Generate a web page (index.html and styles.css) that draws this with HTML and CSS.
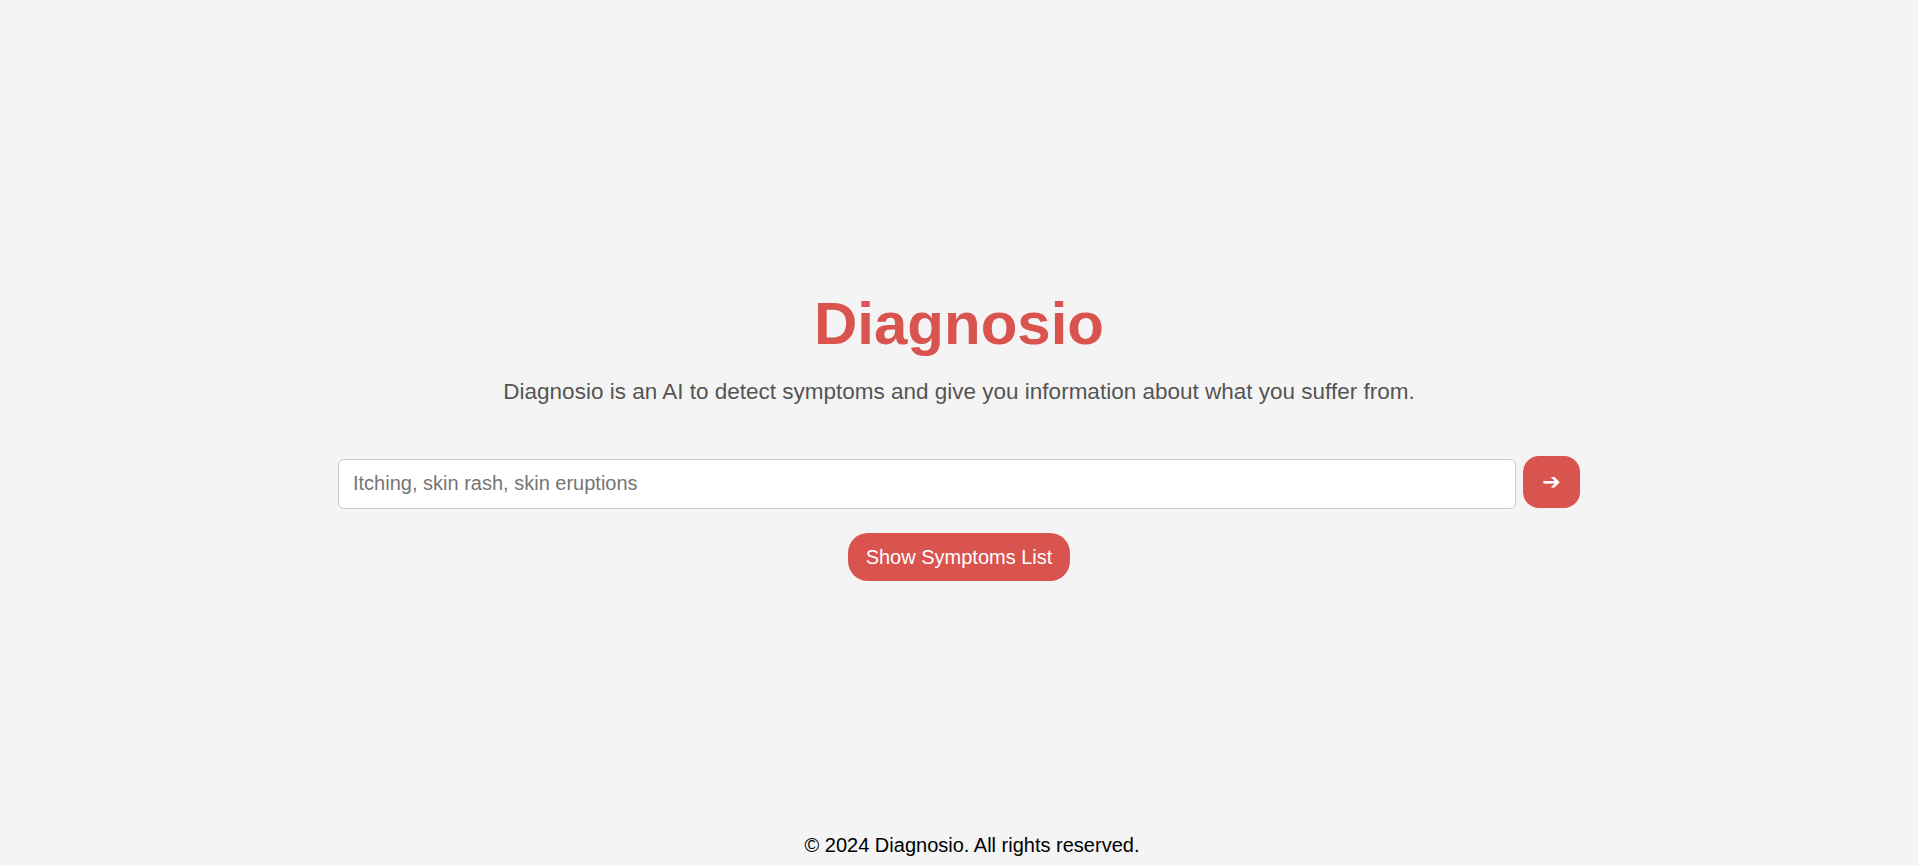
FILE: index.html
```html
<!DOCTYPE html>
<html lang="en">
<head>
<meta charset="utf-8">
<title>Diagnosio</title>
<link rel="stylesheet" href="styles.css">
</head>
<body>
<main class="main">
  <h1 class="title">Diagnosio</h1>
  <p class="subtitle">Diagnosio is an AI to detect symptoms and give you information about what you suffer from.</p>
  <form class="search" onsubmit="return false">
    <input class="search-input" type="text" placeholder="Itching, skin rash, skin eruptions">
    <button class="search-btn" type="submit">&#10132;</button>
  </form>
  <button class="list-btn" type="button">Show Symptoms List</button>
</main>
<footer class="footer">&copy; 2024 Diagnosio. All rights reserved.</footer>
</body>
</html>
```

FILE: styles.css
```css
* { box-sizing: border-box; }
html, body { height: 100%; }
body {
  margin: 0;
  background: #f4f4f4;
  font-family: "Liberation Sans", Arial, sans-serif;
  color: #000;
  display: flex;
  flex-direction: column;
}
.main {
  flex: 1;
  display: flex;
  flex-direction: column;
  align-items: center;
  justify-content: center;
  padding-top: 45px;
}
.title {
  margin: 0;
  font-size: 60px;
  line-height: 69px;
  font-weight: bold;
  color: #d9534f;
}
.subtitle {
  margin: 17px 0 0;
  font-size: 22.5px;
  line-height: 33px;
  color: #555;
}
.search {
  margin-top: 48px;
  width: 1242px;
  display: flex;
  align-items: center;
  gap: 7px;
}
.search-input {
  flex: 1;
  height: 50px;
  margin-top: 3px;
  padding: 0 14px;
  font-family: "Liberation Sans", Arial, sans-serif;
  font-size: 20px;
  border: 1px solid #ccc;
  border-radius: 6px;
  background: #fff;
  color: #333;
  outline: none;
}
.search-input::placeholder { color: #757575; }
.search-btn {
  width: 57px;
  height: 52px;
  border: none;
  border-radius: 16px;
  background: #d9534f;
  color: #fff;
  font-family: "DejaVu Sans", sans-serif;
  font-size: 22px;
  line-height: 1;
  padding: 0;
  cursor: pointer;
}
.list-btn {
  margin-top: 24px;
  padding: 12px 18px;
  border: none;
  border-radius: 20px;
  background: #d9534f;
  color: #fff;
  font-family: "Liberation Sans", Arial, sans-serif;
  font-size: 20px;
  line-height: 24px;
  cursor: pointer;
}
.footer {
  padding: 10px 0 8px 26px;
  text-align: center;
  font-size: 20px;
  line-height: 23px;
  color: #000;
}
```
